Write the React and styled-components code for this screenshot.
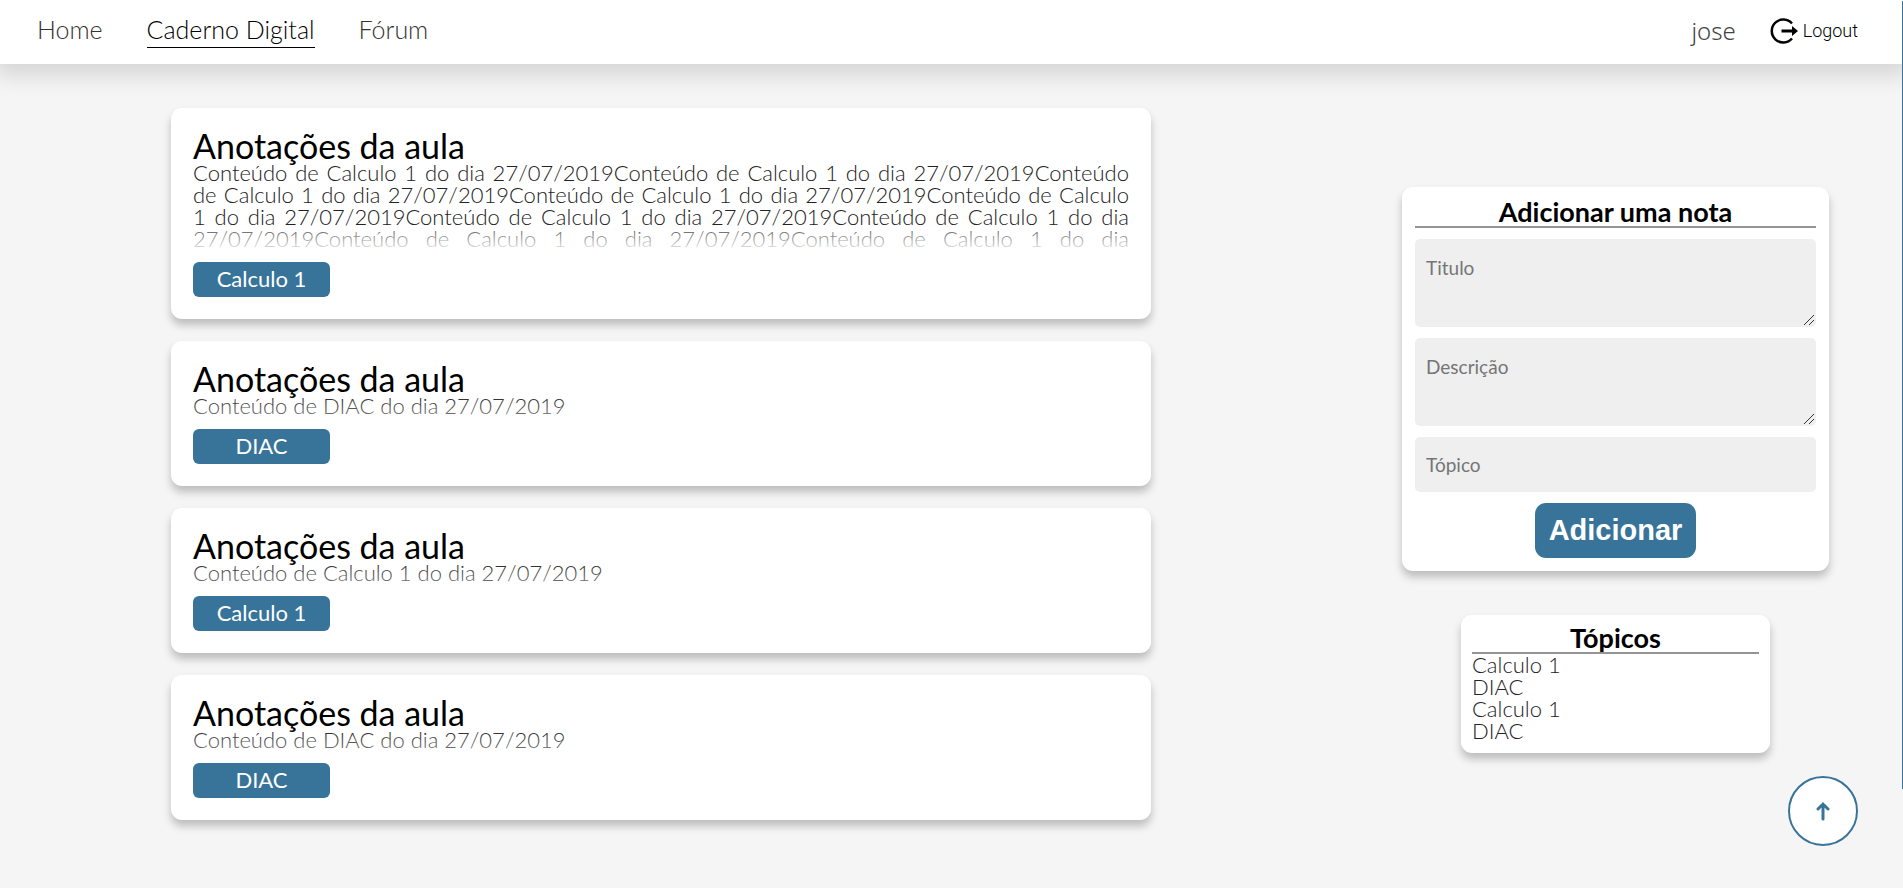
import React from "react";
import styled, { createGlobalStyle } from "styled-components";

const blue = "#387499";

const GlobalStyle = createGlobalStyle`
  *, *::before, *::after { box-sizing: border-box; margin: 0; padding: 0; }
  body {
    min-height: 100vh;
    background: #f5f5f5;
    color: #000;
    font: 300 22px/22px Lato, sans-serif;
  }
  ul { list-style: none; }
`;

const Header = styled.header`
  display: flex;
  align-items: center;
  justify-content: space-between;
  height: 64px;
  padding: 0 45px 2px 37px;
  background: #fff;
  box-shadow: 0 5px 22px 5px rgba(0, 0, 0, 0.14);
`;

const Nav = styled.nav`
  display: flex;
  gap: 44px;
`;

const NavLink = styled.a`
  padding-bottom: 4px;
  border-bottom: 1px solid ${(p) => (p.$active ? "#000" : "transparent")};
  color: ${(p) => (p.$active ? "#000" : "#333")};
  font-size: 25px;
  line-height: 28px;
  text-decoration: none;
`;

const Account = styled.div`
  display: flex;
  align-items: center;
  gap: 34px;
`;

const UserName = styled.span`
  color: #444;
  font: 300 24px/28px "Noto Sans", sans-serif;
`;

const LogoutButton = styled.button`
  display: flex;
  align-items: center;
  gap: 5px;
  border: 0;
  background: none;
  color: #000;
  font: 300 18px/22px Roboto, sans-serif;
  cursor: pointer;
`;

const Page = styled.main`
  display: grid;
  grid-template-columns: 980fr 427fr;
  column-gap: 251px;
  align-items: start;
  padding: 44px 74px 44px 171px;
`;

const NoteList = styled.section`
  display: flex;
  flex-direction: column;
  gap: 22px;
`;

const Card = styled.article`
  border-radius: 11px;
  background: #fff;
  box-shadow: 0 6px 8px rgba(0, 0, 0, 0.23);
`;

const NoteCard = styled(Card)`
  padding: 21px 22px 22px;
`;

const NoteTitle = styled.h2`
  font-size: 34px;
  font-weight: 400;
  line-height: 33px;
`;

const NoteText = styled.p`
  position: relative;
  max-height: 88px;
  overflow: hidden;
  color: #222;
  text-align: justify;

  &::after {
    content: "";
    position: absolute;
    inset: auto 0 0;
    height: 22px;
    background: ${(p) =>
      p.$long
        ? "linear-gradient(rgba(255, 255, 255, 0.25), rgba(255, 255, 255, 0.9))"
        : "linear-gradient(rgba(255, 255, 255, 0), rgba(255, 255, 255, 0.4))"};
  }
`;

const Tag = styled.a`
  display: block;
  width: 137px;
  height: 35px;
  margin-top: 12px;
  border-radius: 6px;
  background: ${blue};
  color: #fff;
  font-weight: 400;
  line-height: 34px;
  text-align: center;
  text-decoration: none;
`;

const Sidebar = styled.aside`
  display: flex;
  flex-direction: column;
  align-items: center;
  gap: 44px;
  padding-top: 79px;
`;

const NoteForm = styled(Card).attrs({ as: "form" })`
  display: flex;
  flex-direction: column;
  align-items: center;
  gap: 11px;
  width: 100%;
  padding: 13px;
`;

const PanelTitle = styled.h2`
  width: 100%;
  padding-bottom: 2px;
  border-bottom: 2px solid #949494;
  font-size: 27px;
  font-weight: 700;
  line-height: 24px;
  text-align: center;
`;

const Field = styled.input`
  display: block;
  width: 100%;
  height: 55px;
  padding: 0 11px;
  border: 0;
  border-radius: 5px;
  background: #efefef;
  font: 400 19px/22px Lato, sans-serif;

  &::placeholder { color: #757575; }
`;

const TextField = styled(Field).attrs({ as: "textarea" })`
  height: 88px;
  padding: 18px 11px;
  resize: vertical;

  &::-webkit-resizer {
    background: linear-gradient(135deg, transparent 58%, #333 58% 65%, transparent 65% 77%, #333 77% 84%, transparent 84%)
      0 0 / 13px 13px no-repeat;
  }
`;

const SubmitButton = styled.button`
  height: 55px;
  padding: 0 14px;
  border: 0;
  border-radius: 11px;
  background: ${blue};
  color: #fff;
  font: 700 29px/33px "Liberation Sans", sans-serif;
  cursor: pointer;
`;

const TopicsCard = styled(Card)`
  width: 309px;
  padding: 11px;
`;

const Topic = styled.a`
  display: block;
  color: #222;
  text-decoration: none;
`;

const ScrollTop = styled.button`
  position: fixed;
  right: 45px;
  bottom: 42px;
  display: grid;
  place-items: center;
  width: 70px;
  height: 70px;
  border: 2px solid ${blue};
  border-radius: 50%;
  background: #fff;
  color: ${blue};
  cursor: pointer;
`;

const ScrollMarker = styled.div`
  position: fixed;
  top: 1px;
  right: 0;
  width: 1px;
  height: 788px;
  background: ${blue};
`;

const calculo = "Conteúdo de Calculo 1 do dia 27/07/2019";
const diac = "Conteúdo de DIAC do dia 27/07/2019";

const notes = [
  { text: calculo.repeat(10), topic: "Calculo 1", long: true },
  { text: diac, topic: "DIAC" },
  { text: calculo, topic: "Calculo 1" },
  { text: diac, topic: "DIAC" },
];

const LogoutIcon = () => (
  <svg width="28" height="26" viewBox="0 0 28 26" aria-hidden="true">
    <path d="M22 5.5A11.5 11.5 0 1 0 22 20.5" fill="none" stroke="#000" strokeWidth="2.5" />
    <path d="M11.5 11.5H22V8l6 5-6 5v-3.5H11.5z" fill="#000" />
  </svg>
);

const ArrowUp = () => (
  <svg
    width="14"
    height="20"
    viewBox="0 0 14 20"
    fill="none"
    stroke="currentColor"
    strokeWidth="3"
    strokeLinecap="round"
    aria-hidden="true"
  >
    <path d="M7 18V3M2 8l5-5 5 5" />
  </svg>
);

export default function App() {
  return (
    <>
      <GlobalStyle />
      <Header>
        <Nav>
          <NavLink href="#home">Home</NavLink>
          <NavLink href="#caderno" $active aria-current="page">Caderno Digital</NavLink>
          <NavLink href="#forum">Fórum</NavLink>
        </Nav>
        <Account>
          <UserName>jose</UserName>
          <LogoutButton type="button"><LogoutIcon />Logout</LogoutButton>
        </Account>
      </Header>
      <Page>
        <NoteList>
          {notes.map((note, i) => (
            <NoteCard key={i}>
              <NoteTitle>Anotações da aula</NoteTitle>
              <NoteText $long={note.long}>{note.text}</NoteText>
              <Tag href="#topico">{note.topic}</Tag>
            </NoteCard>
          ))}
        </NoteList>
        <Sidebar>
          <NoteForm>
            <PanelTitle>Adicionar uma nota</PanelTitle>
            <TextField placeholder="Titulo" aria-label="Titulo" />
            <TextField placeholder="Descrição" aria-label="Descrição" />
            <Field type="text" placeholder="Tópico" aria-label="Tópico" />
            <SubmitButton type="button">Adicionar</SubmitButton>
          </NoteForm>
          <TopicsCard>
            <PanelTitle>Tópicos</PanelTitle>
            <ul>
              {notes.map((note, i) => (
                <li key={i}><Topic href="#topico">{note.topic}</Topic></li>
              ))}
            </ul>
          </TopicsCard>
        </Sidebar>
      </Page>
      <ScrollTop type="button" aria-label="Voltar ao topo"><ArrowUp /></ScrollTop>
      <ScrollMarker />
    </>
  );
}
